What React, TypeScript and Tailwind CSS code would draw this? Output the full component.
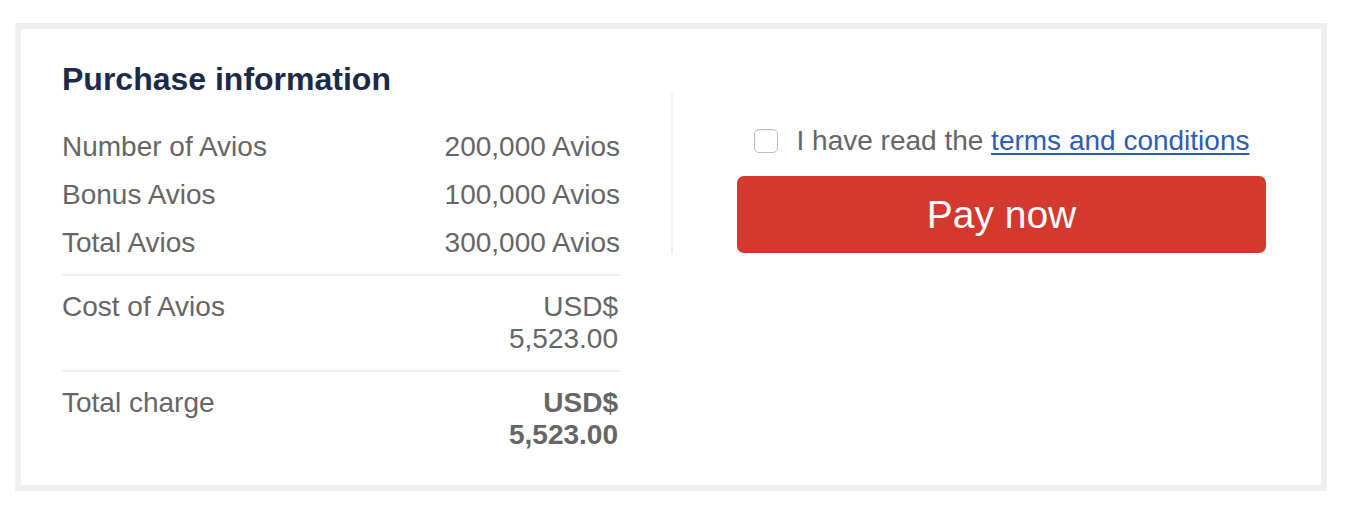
import { useState } from 'react';

const rows = [
  { label: 'Number of Avios', value: '200,000 Avios' },
  { label: 'Bonus Avios', value: '100,000 Avios' },
  { label: 'Total Avios', value: '300,000 Avios' },
];

function App() {
  const [agreed, setAgreed] = useState(false);

  return (
    <div
      className="min-h-screen bg-white pt-[23px] pl-[15px]"
      style={{ fontFamily: '"Liberation Sans", Arial, sans-serif' }}
    >
      <div className="w-[1312px] h-[468px] border-[6px] border-[#efefef] bg-white pt-[30px] pl-[41px] flex items-start">
        <section className="w-[558px] text-[#666666]">
          <h2 className="text-[32px] leading-[40px] font-bold text-[#1b2a4b]">Purchase information</h2>

          <div className="mt-[24px] pb-[7px] border-b-2 border-[#efefef]">
            {rows.map((r) => (
              <div key={r.label} className="flex justify-between py-2 text-[28px] leading-[32px]">
                <span>{r.label}</span>
                <span>{r.value}</span>
              </div>
            ))}
          </div>

          <div className="flex justify-between pt-[15px] pb-[15px] border-b-2 border-[#efefef] text-[28px] leading-[32px]">
            <span>Cost of Avios</span>
            <span className="text-right pr-[2px]">
              USD$
              <br />
              5,523.00
            </span>
          </div>

          <div className="flex justify-between pt-[15px] text-[28px] leading-[32px]">
            <span>Total charge</span>
            <span className="text-right font-bold pr-[2px]">
              USD$
              <br />
              5,523.00
            </span>
          </div>
        </section>

        <section className="ml-[51px] mt-[35px] flex-1 border-l-2 border-[#efefef] pl-[9px] pt-[31px] pb-[1px] flex flex-col items-center">
          <label className="flex items-center gap-[19px] text-[28px] leading-[32px] text-[#666666] cursor-pointer">
            <button
              type="button"
              onClick={() => setAgreed(!agreed)}
              className="w-[24px] h-[24px] rounded-[5px] border border-[#bdbdbd] bg-white shadow-[inset_0_1px_1px_rgba(0,0,0,0.06)] flex items-center justify-center"
            >
              {agreed && (
                <svg viewBox="0 0 16 16" className="w-4 h-4" fill="none" stroke="#2e5cb8" strokeWidth="2.5">
                  <path d="M3 8.5l3 3 7-7" />
                </svg>
              )}
            </button>
            <span>
              I have read the{' '}
              <a href="#" className="text-[#2e5cb8] underline decoration-[2px] underline-offset-[3px]">
                terms and conditions
              </a>
            </span>
          </label>

          <button
            type="button"
            className="mt-[19px] w-[529px] h-[77px] rounded-[7px] bg-[#d3392e] text-white text-[39px] leading-none"
          >
            Pay now
          </button>
        </section>
      </div>
    </div>
  );
}

export default App;
